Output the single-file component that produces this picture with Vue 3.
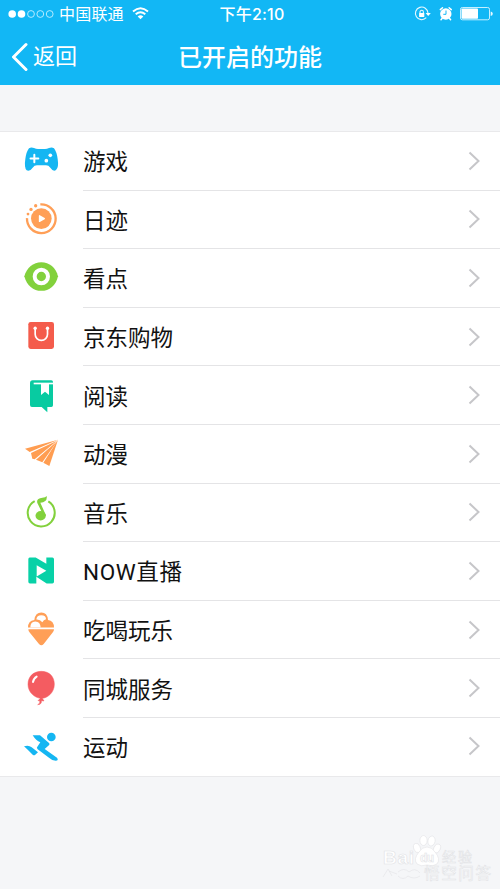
<script setup>
const rows = [
  { name: '游戏', icon: 'game', box: '63 34 120 120' },
  { name: '日迹', icon: 'story', box: '63 209.7 120 120' },
  { name: '看点', icon: 'eye', box: '63 25.5 120 120' },
  { name: '京东购物', icon: 'shop', box: '63 201.3 120 120' },
  { name: '阅读', icon: 'read', box: '63 17 120 120' },
  { name: '动漫', icon: 'plane', box: '63 193 120 120' },
  { name: '音乐', icon: 'music', box: '63 23.7 120 120' },
  { name: 'NOW直播', icon: 'now', box: '63 199.5 120 120' },
  { name: '吃喝玩乐', icon: 'food', box: '63 30.3 120 120' },
  { name: '同城服务', icon: 'balloon', box: '63 206 120 120' },
  { name: '运动', icon: 'sport', box: '63 382 120 120' },
]
</script>

<template>
  <div class="screen">
    <header class="top">
      <div class="status">
        <div class="side">
          <svg class="dots" width="46" height="10" viewBox="0 0 46 10">
            <circle cx="4.2" cy="5" r="3.8" fill="#fff" />
            <circle cx="13.5" cy="5" r="3.8" fill="#fff" />
            <g fill="none" stroke="#c5efff" stroke-width=".9">
              <circle cx="23" cy="5" r="3.4" />
              <circle cx="32.3" cy="5" r="3.4" />
              <circle cx="41.7" cy="5" r="3.4" />
            </g>
          </svg>
          <span class="carrier">中国联通</span>
          <svg class="wifi" width="17" height="13" viewBox="0 0 17 13">
            <g fill="none" stroke="#fff" stroke-width="1.9">
              <path d="M1 4.500Q8.500-2 16 4.500" />
              <path d="M3.700 7.300Q8.500 3.200 13.300 7.300" />
            </g>
            <path d="M5.700 9.400Q8.500 7.200 11.300 9.400L8.500 12.300Z" fill="#fff" />
          </svg>
        </div>
        <span class="time">下午2:10</span>
        <div class="side right">
          <svg class="indicators" width="80" height="18" viewBox="0 0 80 18">
            <g fill="none" stroke="#e6f8ff" stroke-width="1.100">
              <path d="M13.300 12.700A6.300 6.300 0 1 1 15 8" />
              <path d="M7 8.400V7a1.700 1.700 0 0 1 3.400 0V8.400" />
            </g>
            <rect x="6.100" y="8" width="5.200" height="4" rx=".5" fill="#fff" />
            <path d="M12.600 8h5.200L15.200 11Z" fill="#fff" />
            <circle cx="32.800" cy="9" r="5.700" fill="#fff" />
            <path d="M27.300 4.600L29.500 2.700M38.300 4.600L36.100 2.700M29.200 13.200L28 14.700M36.400 13.200L37.600 14.700" stroke="#fff" stroke-width="1.500" stroke-linecap="round" />
            <path d="M33 5.500V9.300H30.300" fill="none" stroke="#12b7f5" stroke-width="1" />
            <rect x="47.500" y="2.500" width="29" height="12.300" rx="1.800" fill="none" stroke="#c5efff" />
            <rect x="48.500" y="3.500" width="16.500" height="10.300" rx=".8" fill="#fff" />
            <path d="M77.700 6.500Q79.800 7 79.800 8.700T77.700 10.900Z" fill="#e6f8ff" />
          </svg>
        </div>
      </div>
      <div class="nav">
        <div class="back">
          <svg width="17" height="30" viewBox="0 0 17 30">
            <path d="M15 2.500L2.500 15L15 27.500" fill="none" stroke="#fff" stroke-width="3" stroke-linecap="round" stroke-linejoin="round" />
          </svg>
          <span>返回</span>
        </div>
        <h1>已开启的功能</h1>
      </div>
    </header>

    <ul class="list">
      <li v-for="row in rows" :key="row.icon" class="row">
        <svg class="icon" width="40" height="40" :viewBox="row.box">
          <g v-if="row.icon === 'game'">
            <path d="M87 56Q93 52 102 55Q108 58 114 58H135Q141 58 147 55Q156 52 162 56Q170 66 173 88Q177 114 168 121Q160 127 151 114Q146 107 138 107H111Q103 107 98 114Q89 127 80 122Q72 114 76 88Q79 66 87 56Z" fill="#15b6f2" />
            <path d="M103 75V98M91.500 86.500H115" stroke="#fff" stroke-width="6" stroke-linecap="round" />
            <circle cx="151" cy="77" r="5.500" fill="#fff" />
            <circle cx="139" cy="93" r="5.500" fill="#fff" />
          </g>
          <g v-else-if="row.icon === 'story'" fill="#ff9f57">
            <path d="M121 223A43 43 0 1 1 81 264" fill="none" stroke="#ff9f57" stroke-width="7" />
            <circle cx="124" cy="265.500" r="31" />
            <circle cx="84" cy="252" r="4.200" />
            <circle cx="93" cy="238" r="5" />
            <circle cx="107" cy="227" r="5" />
            <path d="M118.500 257V274L133 265.500Z" fill="#fff" stroke="#fff" stroke-width="4" stroke-linejoin="round" />
          </g>
          <g v-else-if="row.icon === 'eye'">
            <path d="M73 80C80 54 100 38 124 38S168 54 174 80C168 108 148 124 124 124S80 108 73 80Z" fill="#82d13c" />
            <circle cx="124" cy="81" r="20" fill="none" stroke="#fff" stroke-width="12" />
          </g>
          <g v-else-if="row.icon === 'shop'">
            <rect x="85" y="216" width="77" height="81" rx="7" fill="#f45c4c" />
            <path d="M105.500 236V253A18.500 18.500 0 0 0 142.500 253V236" fill="none" stroke="#fff" stroke-width="5" />
            <circle cx="105.500" cy="235" r="5" fill="#fff" />
            <circle cx="142.500" cy="235" r="5" fill="#fff" />
          </g>
          <g v-else-if="row.icon === 'read'">
            <path d="M98 30H154Q159 30 159 35V105Q159 110 154 110H142V126L125 110H96Q90 110 90 104V39Q90 30 98 30Z" fill="#08cba1" />
            <path d="M101 39.500H160" stroke="#fff" stroke-width="5" />
            <path d="M123 41H147V74L135 64L123 74Z" fill="#fff" />
          </g>
          <g v-else-if="row.icon === 'plane'" fill="#ff9d51">
            <path d="M174 210L75 237L89 247Z" />
            <path d="M171 213L93 250L97 267L104 269Z" />
            <path d="M172 214L108 270L127 278Z" />
            <path d="M174 210L130 279L148 289Z" />
          </g>
          <g v-else-if="row.icon === 'music'" fill="#82d13c">
            <path d="M104 48A40.500 40.500 0 1 0 145 49" fill="none" stroke="#82d13c" stroke-width="6" />
            <ellipse cx="122" cy="92" rx="15.500" ry="14" />
            <path d="M132 94L112 54Q108 40 127 38Q137 38 140 33Q143 50 121 53L138 91Z" />
          </g>
          <g v-else-if="row.icon === 'now'">
            <path d="M89 219H107L139 238V219H157Q162 219 162 224V292Q162 297 157 297H140L109 277V297H90Q85 297 85 292V224Q85 219 89 219Z" fill="#08d1a7" />
            <path d="M110 242V276L139 259Z" fill="#fff" />
          </g>
          <g v-else-if="row.icon === 'food'" fill="#ff9f57">
            <path d="M85 88H162Q162 93 158 98L131 132Q124 140 117 132L89 98Q85 93 85 88Z" />
            <path d="M84 83Q84 62 103 60Q106 38 124 38T144 60Q162 62 162 83Z" />
            <path d="M109 59Q110 46 124 46T138 58Q131 60 127 67Q120 58 109 59Z" fill="#fff" />
            <path d="M91 83Q91 65 106 65T122 83Z" fill="#fff" />
          </g>
          <g v-else-if="row.icon === 'balloon'">
            <path d="M124 213C148 213 163 229 163 252C163 278 141 293 127 294L132 302L124 301Q126 312 113 313Q122 308 119 301H114L121 294C105 292 84 277 84 252C84 229 100 213 124 213Z" fill="#f45c61" stroke="#f45c61" stroke-width="1.500" stroke-linejoin="round" />
            <path d="M99 245Q101 234 110 229" fill="none" stroke="#fff" stroke-width="6" stroke-linecap="round" />
          </g>
          <g v-else fill="#15b6f2">
            <circle cx="154" cy="412" r="13" />
            <path d="M98 407L120 407L147 430Q151 435 144 439L134 448L171 474Q177 483 167 483Q155 482 147 474L113 449Q108 445 113 440L121 428Q108 423 98 407Z" />
            <path d="M72 440Q86 435 95 443L114 458L105 466Q102 468 98 465Q85 452 72 440Z" />
          </g>
        </svg>
        <div class="cell">
          <span class="label" :class="{ mixed: row.icon === 'now' }">{{ row.name }}</span>
          <svg class="chevron" width="13" height="20" viewBox="0 0 13 20">
            <path d="M1.500 1.500L10.500 10L1.500 18.500" fill="none" stroke="#c6c6c9" stroke-width="2" />
          </svg>
        </div>
      </li>
    </ul>

    <svg class="mark" width="120" height="54" viewBox="0 0 120 54">
      <g fill="#fff" stroke="#e2e3e6" stroke-width=".6">
        <ellipse cx="41" cy="15" rx="3.300" ry="4.800" transform="rotate(-20 41 15)" />
        <ellipse cx="47.500" cy="7.500" rx="3.600" ry="5" />
        <ellipse cx="55.500" cy="8" rx="3.600" ry="5" transform="rotate(12 55.500 8)" />
        <ellipse cx="61" cy="15.500" rx="3.200" ry="4.800" transform="rotate(25 61 15.500)" />
        <path d="M51 14Q56 14 59 19Q65 26 61 31Q57 34 51 32Q45 34 41 31Q37 26 43 19Q46 14 51 14Z" />
        <text x="7" y="31" class="latin" textLength="31">Bai</text>
        <text x="44" y="29" class="du" textLength="14">du</text>
        <text x="66" y="29" class="hans" textLength="30">经验</text>
        <text x="48" y="45.500" class="name" textLength="67">悟空问答</text>
        <path d="M22 39q6-5 11 0q6-5 11 1M22 43q5 5 10 0q6 4 12 0" fill="none" />
        <path d="M7 44L12 36L16 43M13 38L21 41" fill="none" />
      </g>
    </svg>
  </div>
</template>

<style>
body {
  background: #f5f6f8;
}
</style>

<style scoped>
.screen {
  position: relative;
  height: 889px;
  overflow: hidden;
  background: #f5f6f8;
  font-family: Roboto, "Noto Sans CJK SC", sans-serif;
  color: #111;
}
.top {
  height: 85px;
  background: #12b7f5;
  color: #fff;
}
.status {
  display: grid;
  grid-template-columns: 1fr auto 1fr;
  align-items: center;
  height: 28px;
  padding: 0 7px 0 8px;
  line-height: 28px;
}
.side {
  display: flex;
  align-items: center;
}
.right {
  justify-content: flex-end;
}
.indicators {
  margin-bottom: 2px;
}
.carrier {
  margin-left: 5px;
  padding-top: 1px;
  font-size: 16px;
  letter-spacing: .2px;
}
.wifi {
  margin: 0 0 2px 8px;
}
.dots {
  margin-bottom: 1px;
}
.time {
  padding: 0 0 1px 3px;
  font-family: Inter, "Noto Sans CJK SC", sans-serif;
  font-size: 16px;
  font-weight: 500;
  letter-spacing: .2px;
}
.nav {
  display: grid;
  grid-template-columns: 1fr auto 1fr;
  align-items: center;
  height: 57px;
}
.back {
  display: flex;
  align-items: center;
  gap: 5px;
  padding-left: 11px;
  font-size: 22px;
  line-height: 56px;
}
h1 {
  margin: 0;
  padding-top: 3px;
  font-size: 24px;
  font-weight: 500;
  line-height: 54px;
}
.list {
  margin: 47px 0 0;
  padding: 0;
  list-style: none;
  background: #fff;
  box-shadow: 0 0 0 1px #e9e9eb;
}
.row {
  display: flex;
  align-items: center;
  height: 58.600px;
  padding-left: 21px;
}
.row:last-child {
  height: 58px;
}
.icon {
  flex: none;
  margin-right: 22px;
}
.cell {
  display: flex;
  flex: 1;
  align-items: center;
  justify-content: space-between;
  box-sizing: border-box;
  height: 100%;
  padding-right: 19px;
  border-bottom: 1px solid #e4e4e6;
  font-size: 22.500px;
}
.label {
  padding-bottom: 1px;
}
.mixed {
  letter-spacing: .6px;
}
.row:last-child .cell {
  border-bottom-color: transparent;
}
.mark {
  position: absolute;
  left: 376px;
  top: 833px;
}
.latin {
  font: bold 19px "Liberation Sans", sans-serif;
}
.du {
  font: bold 12px "Liberation Sans", sans-serif;
}
.hans {
  font: 14px "Noto Sans CJK SC", sans-serif;
}
.name {
  font: 15.500px "Noto Sans CJK SC", sans-serif;
}
</style>
